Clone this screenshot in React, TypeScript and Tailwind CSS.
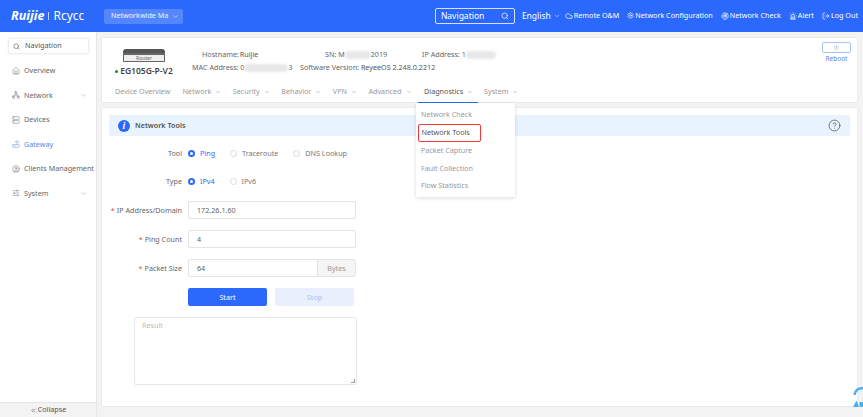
import { ChevronDown, ChevronUp, ChevronsLeft, Cloud, Home, Network, Search, Server, Router, CircleUser, SlidersHorizontal, Siren, LogOut, Radar, Settings, CircleHelp, Power } from 'lucide-react'

const navItems = [
  { label: 'Overview', icon: Home },
  { label: 'Network', icon: Network, arrow: true },
  { label: 'Devices', icon: Server },
  { label: 'Gateway', icon: Router, active: true },
  { label: 'Clients Management', icon: CircleUser },
  { label: 'System', icon: SlidersHorizontal, arrow: true },
]

const tabs = ['Network', 'Security', 'Behavior', 'VPN', 'Advanced']
const menu = ['Network Check', 'Network Tools', 'Packet Capture', 'Fault Collection', 'Flow Statistics']

function Radio({ label, checked }: { label: string; checked?: boolean }) {
  return (
    <div className="flex items-center gap-[5px]">
      {checked ? (
        <span className="flex h-[7px] w-[7px] items-center justify-center rounded-full bg-[#2b6afd]">
          <span className="h-[3px] w-[3px] rounded-full bg-white" />
        </span>
      ) : (
        <span className="h-[7px] w-[7px] rounded-full border border-[#d9d9d9] bg-white" />
      )}
      <span className={checked ? 'text-[#2b6afd]' : 'text-[#777]'}>{label}</span>
    </div>
  )
}

function Label({ text, required }: { text: string; required?: boolean }) {
  return (
    <div className="w-[73px] shrink-0 whitespace-nowrap text-right text-[#666]">
      {required && <span className="mr-[2px] text-[#f5483b]">*</span>}
      {text}
    </div>
  )
}

function Blur({ w }: { w: string }) {
  return <span className={`inline-block h-[8px] rounded-sm bg-[#e8e8e8] align-middle blur-[1px] ${w}`} />
}

export default function App() {
  return (
    <div className="flex h-[417px] w-[863px] flex-col overflow-hidden bg-[#f3f3f3] text-[7.2px] leading-none text-[#666] [font-family:'Noto_Sans',sans-serif]">
      {/* Top bar */}
      <header className="flex h-[32px] shrink-0 items-center bg-[#2a69fc] pl-[11px] pr-[5px] text-white">
        <div className="flex w-[93px] items-center gap-[4px]">
          <span className="text-[12.5px] font-bold italic">Ruijie</span>
          <span className="h-[8px] w-px bg-white/70" />
          <span className="text-[12px]">Rcycc</span>
        </div>
        <div className="flex h-[15px] w-[79px] items-center gap-[4px] rounded-[2px] bg-white/20 pl-[7px] text-white/90">
          Networkwide Ma
          <ChevronDown size={7} />
        </div>
        <div className="ml-auto flex h-[16px] w-[80px] items-center justify-between rounded-[2px] border border-white/80 px-[5px] text-[8.5px]">
          Navigation
          <Search size={8} />
        </div>
        <div className="ml-[7px] flex items-center gap-[3px] text-[8.5px]">
          English
          <ChevronDown size={6} />
        </div>
        <div className="ml-[5px] flex items-center gap-[1px]"><Cloud size={8} />Remote O&amp;M</div>
        <div className="ml-[8px] flex items-center gap-[1px]"><Settings size={7} />Network Configuration</div>
        <div className="ml-[8px] flex items-center gap-[1px]"><Radar size={8} />Network Check</div>
        <div className="ml-[8px] flex items-center gap-[1px]"><Siren size={8} />Alert</div>
        <div className="ml-[8px] flex items-center gap-[1px]"><LogOut size={8} />Log Out</div>
      </header>

      <div className="flex min-h-0 flex-1">
        {/* Sidebar */}
        <aside className="flex w-[97px] shrink-0 flex-col border-r border-[#e6e6e6] bg-white">
          <div className="flex-1 pl-[8px] pr-[7px] pt-[6px]">
            <div className="flex h-[16px] items-center gap-[5px] rounded-[2px] border border-[#eee] pl-[4px] text-[#555] shadow-[0_0_2px_rgba(0,0,0,0.1)]">
              <Search size={7} />
              Navigation
            </div>
            <nav className="mt-[4.5px] flex flex-col">
              {navItems.map((item) => (
                <div key={item.label} className={`flex h-[24.5px] items-center gap-[4px] whitespace-nowrap pl-[4px] ${item.active ? 'text-[#5b86e8]' : 'text-[#666]'}`}>
                  <item.icon size={8} strokeWidth={1.4} className="shrink-0" />
                  {item.label}
                  {item.arrow && <ChevronDown size={7} className="ml-auto mr-[2px] text-[#aaa]" />}
                </div>
              ))}
            </nav>
          </div>
          <div className="flex h-[15px] items-center justify-center gap-px border-t border-[#e6e6e6] bg-[#f3f3f3] text-[#555]">
            <ChevronsLeft size={7} />
            Collapse
          </div>
        </aside>

        {/* Main column */}
        <main className="relative flex min-w-0 flex-1 flex-col gap-[4px] pl-[4px] pr-[5px] pt-[5px]">
          {/* Device card */}
          <section className="h-[66px] shrink-0 rounded-[2px] border border-[#ececec] bg-white">
            <div className="flex h-[43px]">
              <div className="flex w-[88px] shrink-0 flex-col items-center pr-[4px] pt-[11px]">
                <div className="flex h-[13px] w-[42px] items-end justify-center rounded-t-[3px] border-t-[4px] border-[#555] bg-[#666]">
                  <span className="flex h-[8px] w-full items-center justify-center rounded-[1px] border border-[#666] bg-[#eee] text-[5px] text-[#666]">Router</span>
                </div>
                <div className="mt-[5px] flex items-center gap-[2px] text-[8.5px] font-semibold text-[#444]">
                  <span className="h-[3px] w-[3px] rounded-full bg-[#1a8a3c]" />
                  EG105G-P-V2
                </div>
              </div>
              <div className="flex flex-col gap-[5px] pt-[13px]">
                <div className="flex whitespace-nowrap">
                  <div className="w-[135px] pl-[12px]">Hostname: <span className="-ml-[1px] text-[#555]">Ruijie</span></div>
                  <div className="w-[97px]">SN: M<Blur w="w-[26px]" />2019</div>
                  <div>IP Address: 1<Blur w="w-[30px]" /></div>
                </div>
                <div className="flex whitespace-nowrap">
                  <div className="w-[110px] pl-[2px]">MAC Address: 0<Blur w="w-[44px]" />3</div>
                  <div>Software Version: <span className="text-[#555]">ReyeeOS 2.248.0.2212</span></div>
                </div>
              </div>
              <div className="ml-auto flex flex-col items-center pr-[6px] pt-[4px]">
                <div className="flex h-[11px] w-[29px] items-center justify-center rounded-[2px] border border-[#a9c1f8]">
                  <Power size={5} className="text-[#5b86e8]" />
                </div>
                <span className="mt-[3px] text-[6.5px] text-[#5b86e8]">Reboot</span>
              </div>
            </div>
            <div className="flex h-[22px] items-end pl-[13px] text-[#999]">
              <div className="flex h-[22px] items-center pr-[12px]">Device Overview</div>
              {tabs.map((tab) => (
                <div key={tab} className="flex h-[22px] items-center gap-[4px] pr-[11.5px]">
                  {tab}
                  <ChevronDown size={6} />
                </div>
              ))}
              <div className="-ml-[5px] flex h-[22px] w-[60px] shrink-0 items-center gap-[4px] border-b border-[#2a69fc] pl-[6px] text-[#555]">
                Diagnostics
                <ChevronUp size={6} className="text-[#999]" />
              </div>
              <div className="flex h-[22px] items-center gap-[4px] pl-[6px]">
                System
                <ChevronDown size={6} />
              </div>
            </div>
          </section>

          {/* Network tools card */}
          <section className="h-[300px] shrink-0 rounded-[2px] border border-[#ececec] bg-white pl-[7px] pr-[7px] pt-[7px]">
            <div className="flex h-[21px] items-center rounded-[2px] bg-[#e8f3fd] pl-[9px] pr-[9px] font-semibold text-[#555]">
              <span className="flex h-[12px] w-[12px] items-center justify-center rounded-full bg-[#2a69fc] text-[10px] font-bold italic text-white [font-family:'Liberation_Serif',serif]">i</span>
              <span className="ml-[5px]">Network Tools</span>
              <CircleHelp size={13} strokeWidth={1.3} className="ml-auto text-[#444]" />
            </div>

            <div className="mt-[14px] flex items-center gap-[6px]">
              <Label text="Tool" />
              <div className="flex gap-[15px]">
                <Radio label="Ping" checked />
                <Radio label="Traceroute" />
                <Radio label="DNS Lookup" />
              </div>
            </div>
            <div className="mt-[21px] flex items-center gap-[6px]">
              <Label text="Type" />
              <div className="flex gap-[15px]">
                <Radio label="IPv4" checked />
                <Radio label="IPv6" />
              </div>
            </div>

            <div className="mt-[16px] flex flex-col gap-[11px]">
              <div className="flex items-center gap-[6px]">
                <Label text="IP Address/Domain" required />
                <div className="flex h-[18px] w-[168px] items-center rounded-[2px] border border-[#e4e4e4] pl-[8px]">172.26.1.60</div>
              </div>
              <div className="flex items-center gap-[6px]">
                <Label text="Ping Count" required />
                <div className="flex h-[18px] w-[168px] items-center rounded-[2px] border border-[#e4e4e4] pl-[8px]">4</div>
              </div>
              <div className="flex items-center gap-[6px]">
                <Label text="Packet Size" required />
                <div className="flex h-[18px] w-[168px] items-center rounded-[2px] border border-[#e4e4e4] pl-[8px]">
                  <span className="flex-1">64</span>
                  <span className="flex h-full w-[38px] items-center justify-center border-l border-[#e4e4e4] bg-[#f5f5f5] text-[#999]">Bytes</span>
                </div>
              </div>
            </div>

            <div className="ml-[79px] mt-[11px] flex gap-[8px]">
              <button className="h-[18px] w-[79px] rounded-[2px] bg-[#2a69fc] text-white">Start</button>
              <button className="h-[18px] w-[79px] rounded-[2px] bg-[#e9effd] text-[#a9c1f8]">Stop</button>
            </div>

            <div className="relative ml-[25px] mt-[11px] h-[68px] w-[223px] rounded-[2px] border border-[#e8e8e8] pl-[7px] pt-[4px] text-[#bbb]">
              Result
              <span className="absolute bottom-px right-px h-[4px] w-[4px] border-b border-r border-[#999]" />
            </div>
          </section>

          {/* Diagnostics dropdown */}
          <div className="absolute left-[319px] top-[71px] flex h-[94px] w-[99px] flex-col bg-white pl-[5px] pr-[36px] pt-[3px] text-[#999] shadow-[0_1px_4px_rgba(0,0,0,0.15)]">
            {menu.map((item) => (
              <div key={item} className={`flex h-[17.8px] shrink-0 items-center whitespace-nowrap ${item === 'Network Tools' ? 'w-[63px] -ml-[3px] rounded-[2px] border-[1.5px] border-[#ee3a3a] pl-[2.5px] text-[#555]' : ''}`}>
                {item}
              </div>
            ))}
          </div>

          {/* Floating assistant icon */}
          <svg className="absolute bottom-[9px] right-0 h-[23px] w-[10px]" viewBox="0 0 10 23">
            <path d="M1.5 10a7 7 0 0 1 8.5-6.5" fill="none" stroke="#45b1ee" strokeWidth="2.4" />
            <path d="M0 22l3.5-6.5L6 22zM6.5 22v-5H10v5z" fill="#45b1ee" />
          </svg>
        </main>
      </div>
    </div>
  )
}
